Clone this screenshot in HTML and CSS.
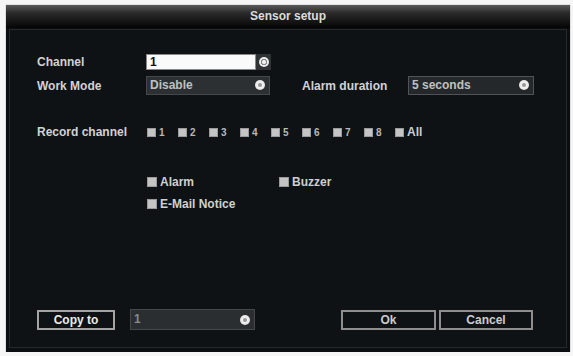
FILE: index.html
```html
<!DOCTYPE html>
<html>
<head>
  <title>Sensor setup</title>
  <link rel="stylesheet" href="styles.css">
</head>
<body>
<div class="dialog">
  <div class="title">Sensor setup</div>
  <div class="content">
    <div class="row row-channel">
      <span class="label">Channel</span>
      <div class="spin">
        <span class="spin-value">1</span>
        <span class="spin-btn"><i class="knob knob-spin"></i></span>
      </div>
    </div>
    <div class="row row-mode">
      <span class="label">Work Mode</span>
      <div class="select select-mode">Disable<i class="knob"></i></div>
      <span class="label label-dur">Alarm duration</span>
      <div class="select select-dur">5 seconds<i class="knob"></i></div>
    </div>
    <div class="row row-record">
      <span class="label">Record channel</span>
      <div class="channels">
        <label class="ch"><i class="box"></i>1</label>
        <label class="ch"><i class="box"></i>2</label>
        <label class="ch"><i class="box"></i>3</label>
        <label class="ch"><i class="box"></i>4</label>
        <label class="ch"><i class="box"></i>5</label>
        <label class="ch"><i class="box"></i>6</label>
        <label class="ch"><i class="box"></i>7</label>
        <label class="ch"><i class="box"></i>8</label>
        <label class="ch ch-all"><i class="box"></i>All</label>
      </div>
    </div>
    <div class="options">
      <label class="opt"><i class="box"></i>Alarm</label>
      <label class="opt"><i class="box"></i>Buzzer</label>
      <label class="opt"><i class="box"></i>E-Mail Notice</label>
    </div>
    <div class="footer">
      <div class="btn btn-copy">Copy to</div>
      <div class="select select-copy">1<i class="knob"></i></div>
      <div class="footer-right">
        <div class="btn btn-ok">Ok</div>
        <div class="btn btn-cancel">Cancel</div>
      </div>
    </div>
  </div>
</div>
</body>
</html>
```

FILE: styles.css
```css
body {
  margin: 0;
  background: #f6f6f6;
  font-family: "Liberation Sans", Arial, sans-serif;
  font-size: 12px;
  font-weight: bold;
  color: #d2d2d2;
}

.dialog {
  width: 564px;
  height: 347px;
  margin: 5px 0 0 6px;
  background: #0c0f11;
  display: flex;
  flex-direction: column;
  box-shadow: 0 0 1px #777;
}

.title {
  height: 23px;
  line-height: 22px;
  text-align: center;
  color: #dcdcdc;
  background: linear-gradient(to bottom, #5a5a5a 0%, #2a2a2a 35%, #050505 100%);
}

.content {
  flex: 1;
  margin: 1px 3px 4px 3px;
  border: 1px solid #25292b;
  background: #0e1215;
  padding: 24px 0 17px 27px;
  display: flex;
  flex-direction: column;
}

.row {
  display: flex;
  align-items: center;
}

.label {
  width: 109px;
  flex-shrink: 0;
}

.row-channel {
  height: 16px;
}

.spin {
  display: flex;
  height: 16px;
}

.spin-value {
  width: 105px;
  background: #fafafa;
  color: #111;
  border: 1px solid #888;
  padding-left: 3px;
  line-height: 14px;
}

.spin-btn {
  width: 15px;
  background: #2f3335;
  display: flex;
  align-items: center;
  justify-content: center;
}

.row-mode {
  margin-top: 6px;
  height: 19px;
}

.select {
  position: relative;
  box-sizing: border-box;
  height: 19px;
  line-height: 17px;
  padding-left: 3px;
  background: #2c3032;
  border: 1px solid #44484a;
  color: #c0c0c0;
}

.select .knob {
  position: absolute;
  right: 4px;
  top: 3px;
}

.select-mode {
  width: 124px;
}

.label-dur {
  margin-left: 32px;
  width: 106px;
}

.select-dur {
  width: 126px;
  background: #24282b;
  border-color: #505456;
}

.knob {
  display: block;
  width: 10px;
  height: 10px;
  border-radius: 50%;
  background: radial-gradient(circle at 50% 50%, #9a9a9a 0 1.5px, #f2f2f2 2.5px, #d6d6d6 100%);
}

.knob-spin {
  background: radial-gradient(circle at 50% 50%, #f2f2f2 0 1.5px, #8a8a8a 2.5px 3px, #ececec 3.5px);
}

.row-record {
  margin-top: 31px;
  height: 12px;
}

.label + .channels {
  margin-left: 1px;
}

.channels {
  display: flex;
}

.ch {
  width: 31px;
  display: flex;
  align-items: center;
  font-size: 10px;
  color: #b8b8b8;
}

.ch-all {
  font-size: 12px;
  color: #cccccc;
}

.box {
  display: block;
  box-sizing: border-box;
  width: 9px;
  height: 9px;
  margin-right: 3px;
  background: #c4c4c4;
  border: 1px solid #9a9a9a;
}

.options {
  margin: 37px 0 0 110px;
  display: grid;
  grid-template-columns: 132px auto;
  row-gap: 9px;
  justify-items: start;
}

.opt {
  display: flex;
  align-items: center;
  height: 13px;
  color: #d0d0d0;
}

.opt .box {
  width: 10px;
  height: 10px;
  margin-right: 3px;
}

.footer {
  margin-top: auto;
  display: flex;
  align-items: center;
  height: 21px;
}

.btn {
  box-sizing: border-box;
  height: 20px;
  line-height: 16px;
  text-align: center;
  border: 2px solid #8e8e8e;
  color: #cccccc;
}

.btn-copy {
  width: 78px;
  border-color: #a4a4a4;
  color: #ececec;
}

.select-copy {
  margin-left: 15px;
  width: 125px;
  height: 21px;
  line-height: 19px;
  color: #8a8a8a;
  background: #2a2e30;
}

.select-copy .knob {
  top: 5px;
}

.footer-right {
  display: flex;
  gap: 3px;
  margin-left: 86px;
}

.btn-ok {
  width: 95px;
}

.btn-cancel {
  width: 94px;
}
```
